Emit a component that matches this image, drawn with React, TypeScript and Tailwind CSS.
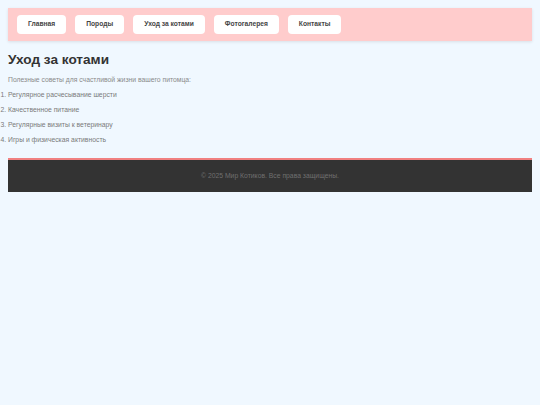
import React from 'react';

const links = ['Главная', 'Породы', 'Уход за котами', 'Фотогалерея', 'Контакты'];

const tips = [
  'Регулярное расчесывание шерсти',
  'Качественное питание',
  'Регулярные визиты к ветеринару',
  'Игры и физическая активность',
];

export default function App() {
  return (
    <div className="min-h-screen bg-[#f0f8ff] p-2 font-['Liberation_Sans',Arial,sans-serif] text-[#333]">
      <nav className="flex h-[33px] items-center gap-[9px] bg-[#ffcccc] px-[9px] shadow-[0_1px_3px_rgba(0,0,0,0.1)]">
        {links.map((link) => (
          <a
            key={link}
            href="#"
            className="flex h-[19px] items-center rounded-[4px] bg-white px-[11px] text-[6.7px] font-bold text-[#444]"
          >
            {link}
          </a>
        ))}
      </nav>

      <h1 className="mt-[9px] text-[13.6px] font-bold leading-[20px] text-[#333]">Уход за котами</h1>
      <p className="mt-[2px] text-[6.8px] leading-[15px] text-[#8a8a8a]">
        Полезные советы для счастливой жизни вашего питомца:
      </p>
      <ol className="list-decimal text-[6.8px] leading-[15px] text-[#7a7a7a]">
        {tips.map((tip) => (
          <li key={tip}>{tip}</li>
        ))}
      </ol>

      <footer className="mt-[11px] flex h-[34px] items-center justify-center border-t-2 border-[#f08080] bg-[#333] text-[6.8px] text-[#6f6f6f]">
        © 2025 Мир Котиков. Все права защищены.
      </footer>
    </div>
  );
}
